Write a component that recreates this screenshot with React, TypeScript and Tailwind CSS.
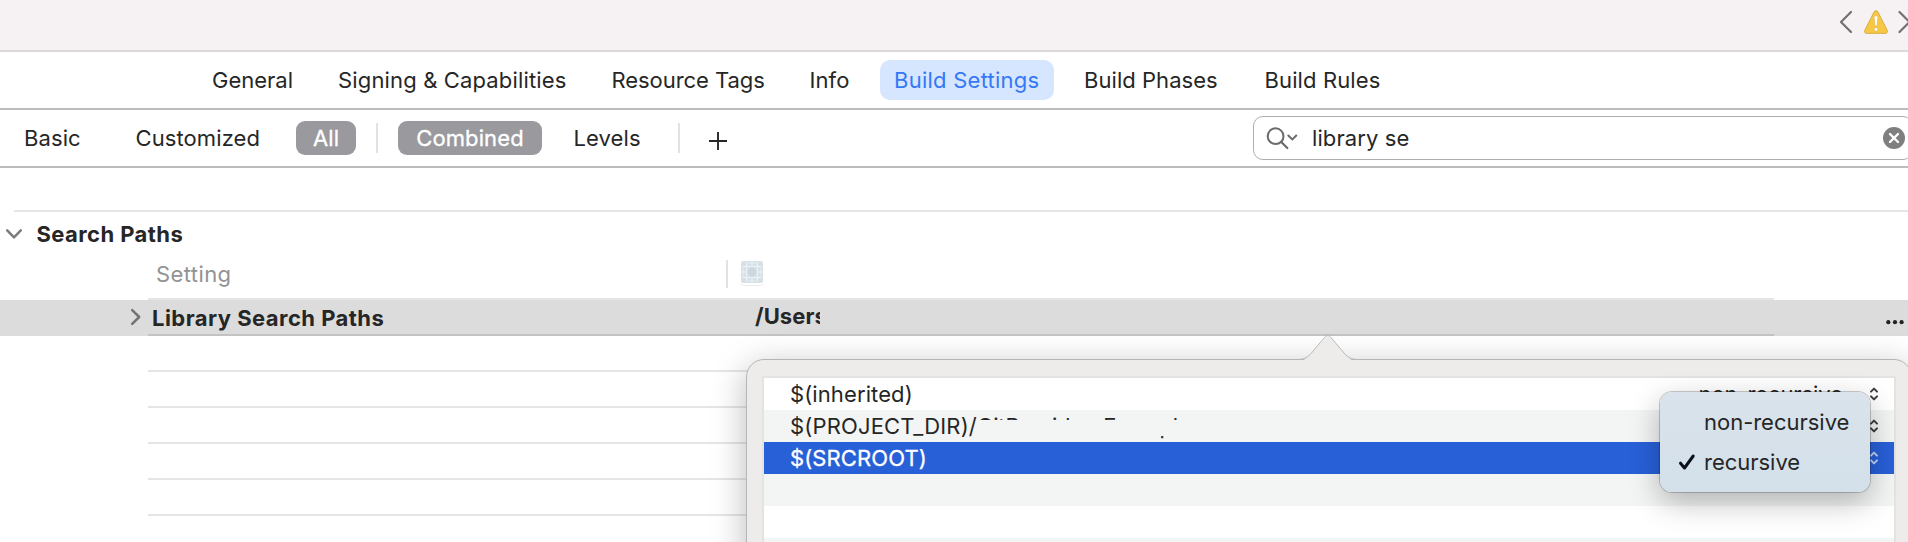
import type { ReactNode } from "react";

const tabs = [
  { label: "General", box: "w-[126px] tracking-[0px]" },
  { label: "Signing & Capabilities", box: "w-[273.5px] tracking-[0.15px]" },
  { label: "Resource Tags", box: "w-[198px] tracking-[-0.05px]" },
  { label: "Info", box: "w-[70.5px] tracking-[0.1px]" },
  { label: "Build Settings", box: "w-[174px] pl-[14px] mr-[30px] tracking-[0.25px]", active: true },
  { label: "Build Phases", box: "w-[180.5px] tracking-[0.05px]" },
  { label: "Build Rules", box: "w-[130px] tracking-[0.12px]" },
];

function Titlebar() {
  return (
    <header className="flex h-[52px] shrink-0 justify-end overflow-hidden border-b-2 border-[#dcd9da] bg-[#f6f2f4]">
      <svg width="72" height="44" viewBox="0 0 72 44" fill="none">
        <path d="M15 12 5 22l10 10" stroke="#737072" strokeWidth="2.2" strokeLinecap="round" strokeLinejoin="round" />
        <path
          d="M38.1 11.9c.8-1.6 3-1.6 3.8 0l9.4 18.6c.7 1.4-.2 2.8-1.7 2.8H30.4c-1.500 0-2.400-1.400-1.700-2.800z"
          fill="#f6c844"
          stroke="#dcab3c"
          strokeWidth="1"
        />
        <path d="M38.100 17.600c-.1-2.400 3.900-2.400 3.800 0l-.8 7.400c-.2 1.600-2 1.600-2.200 0z" fill="#fff" stroke="#d4a63d" strokeWidth=".5" />
        <circle cx="40" cy="29.300" r="1.900" fill="#fff" stroke="#d4a63d" strokeWidth=".5" />
        <path d="M63.500 12l10 10-10 10" stroke="#737072" strokeWidth="2.200" strokeLinecap="round" strokeLinejoin="round" />
      </svg>
    </header>
  );
}

function Tabs() {
  return (
    <nav className="flex h-[58px] shrink-0 items-center border-b-2 border-[#bcbcbc] pl-[212px]">
      {tabs.map((t) => (
        <div
          key={t.label}
          className={`${t.box} flex h-10 shrink-0 items-center rounded-[10px] whitespace-nowrap ${
            t.active ? "bg-[#d6e6fe] text-[#3478f6]" : ""
          }`}
        >
          {t.label}
        </div>
      ))}
    </nav>
  );
}

function FilterBar() {
  return (
    <div className="flex h-[58px] shrink-0 items-center border-b-2 border-[#bcbcbc] tracking-[0.1px] *:shrink-0">
      <span className="ml-[24px] w-[111.5px]">Basic</span>
      <span className="w-[160.5px]">Customized</span>
      <span className="flex h-[34px] w-[60px] items-center justify-center rounded-[9px] bg-[#9a999e] text-white [-webkit-text-stroke:0.3px_white]">
        All
      </span>
      <span className="ml-5 h-[30px] w-0.5 bg-[#e2e2e2]" />
      <span className="ml-5 flex h-[34px] w-[144px] items-center justify-center rounded-[9px] bg-[#9a999e] text-white [-webkit-text-stroke:0.3px_white]">
        Combined
      </span>
      <span className="ml-[31.5px] w-[104.5px]">Levels</span>
      <span className="h-[30px] w-0.5 bg-[#e2e2e2]" />
      <svg className="mt-[6px] ml-[28px]" width="20" height="20" viewBox="0 0 20 20">
        <path d="M1 10h18M10 1v18" stroke="#262626" strokeWidth="1.9" />
      </svg>
      <div className="ml-[525px] flex h-11 w-[660px] items-center rounded-[10px] border border-[#aeaeae] bg-white">
        <svg className="ml-[12px]" width="34" height="28" viewBox="0 0 34 28" fill="none" strokeLinecap="round">
          <circle cx="9.6" cy="12.2" r="7.9" stroke="#6b6b6b" strokeWidth="2" />
          <path d="M15.3 18l6 6" stroke="#6b6b6b" strokeWidth="2.2" />
          <path d="M22.3 11.5l4 3.9 4-3.9" stroke="#6b6b6b" strokeWidth="2" />
        </svg>
        <span className="ml-[12px] grow">library se</span>
        <svg className="mr-[7.5px]" width="22" height="22" viewBox="0 0 22 22">
          <circle cx="11" cy="11" r="11" fill="#7f7f7f" />
          <path d="M7 7l8 8M15 7l-8 8" stroke="#fff" strokeWidth="2.4" strokeLinecap="round" />
        </svg>
      </div>
    </div>
  );
}

function AppIcon() {
  return (
    <svg className="-mt-1 ml-[9px]" width="30" height="30" viewBox="0 0 30 30" fill="none">
      <rect x="2" y="1.8" width="26" height="27.4" rx="6" fill="#eeeeee" />
      <rect x="1.5" y="1" width="27" height="27" rx="6" fill="#ffffff" />
      <rect x="4" y="4" width="22" height="22" rx="2.5" fill="#d5e0e6" />
      <g stroke="#edf2f5" strokeWidth=".8">
        <path d="M4 9.500h22M4 20.500h22M9.500 4v22M20.500 4v22M4 15h4.500M21.500 15H26M15 4v4.500M15 21.500V26" />
        <circle cx="15" cy="15" r="9.300" />
        <circle cx="15" cy="15" r="6.300" />
      </g>
      <circle cx="15" cy="15" r="4" fill="#c9d8df" />
    </svg>
  );
}

function SettingsTable() {
  return (
    <main className="flex flex-col">
      <div className="mt-[42px] ml-[14px] h-0.5 bg-[#e5e5e5]" />
      <div className="flex h-11 items-center font-bold tracking-[0.42px]">
        <svg className="ml-[5px] shrink-0" width="18" height="12" viewBox="0 0 18 12" fill="none">
          <path d="M2.2 2.300 9 9.300l6.800-7" stroke="#7c7c7c" strokeWidth="2.500" strokeLinecap="round" strokeLinejoin="round" />
        </svg>
        <span className="ml-[13.500px]">Search Paths</span>
      </div>
      <div className="flex h-[42px] items-center pb-[6px]">
        <span className="ml-[156px] w-[570px] tracking-[0.4px] text-[#929292]">Setting</span>
        <span className="h-7 w-0.5 bg-[#e2e2e2]" />
        <AppIcon />
      </div>
      <div className="ml-[148px] h-0.5 w-[1626px] bg-[#e5e5e5]" />
      <div className="flex h-9 bg-[#dcdcdc] font-bold">
        <div className="flex w-[148px] items-center justify-end pr-[6px] pb-[3px]">
          <svg width="12" height="18" viewBox="0 0 12 18" fill="none">
            <path d="M2.200 2.200 9.200 9l-7 6.800" stroke="#737373" strokeWidth="2.500" strokeLinecap="round" strokeLinejoin="round" />
          </svg>
        </div>
        <div className="flex w-[1626px] items-center border-b-2 border-[#c3c3c3] pt-0.5">
          <span className="w-[607px] pl-[4px] tracking-[0.46px]">Library Search Paths</span>
          <span className="mb-[4px] w-[65px] overflow-hidden tracking-[0.1px]">/Users</span>
        </div>
        <svg className="mt-[18px] ml-[110px]" width="24" height="8" viewBox="0 0 24 8">
          <circle cx="4.300" cy="4.200" r="2.100" fill="#222" />
          <circle cx="11" cy="4.200" r="2.100" fill="#222" />
          <circle cx="17.600" cy="4.200" r="2.100" fill="#222" />
        </svg>
      </div>
      {[0, 1, 2, 3, 4].map((i) => (
        <div key={i} className="ml-[148px] h-9 w-[1626px] border-b-2 border-[#e5e5e5]" />
      ))}
    </main>
  );
}

function Stepper({ color }: { color: string }) {
  return (
    <svg className="shrink-0" width="10" height="14" viewBox="0 0 10 14" fill="none" stroke={color} strokeWidth="2" strokeLinecap="round" strokeLinejoin="round">
      <path d="M2 4.600 5 1.600l3 3M2 9.400l3 3 3-3" />
    </svg>
  );
}

function PathRow({ tone, stepper, mode, children }: { tone: string; stepper?: string; mode?: string; children?: ReactNode }) {
  return (
    <div className={`flex h-8 items-center pl-[26px] whitespace-nowrap ${tone}`}>
      <div className="flex w-[908.5px] items-center">{children}</div>
      <span className="w-[170px] tracking-[-0.1px]">{mode}</span>
      {stepper && <Stepper color={stepper} />}
    </div>
  );
}

function Popover() {
  return (
    <section className="absolute top-[359px] left-[746px] h-[260px] w-[1166px] rounded-[18px] border border-[#b6b6b6] bg-[#edecea] shadow-[0_8px_34px_rgba(0,0,0,0.27)]">
      <svg className="absolute -top-[25px] left-[550px]" width="62" height="27" viewBox="0 0 62 27">
        <path d="M0 25.500h1c6 0 9.500-2 13.500-6.500L27.500 3.500c2.200-2.600 4.300-2.600 6.500 0L47 19c4 4.500 7.500 6.500 13.500 6.500H62V27H0z" fill="#edecea" />
        <path d="M0 24.500h1c6 0 9.500-2 13.500-6.500L27.500 2.500c2.200-2.600 4.300-2.600 6.500 0L47 18c4 4.500 7.500 6.500 13.500 6.500H62" fill="none" stroke="#b6b6b6" />
      </svg>
      <div className="mt-4 ml-[15px] w-[1134px] border-2 border-[#e3e3e2] bg-white">
        <PathRow tone="bg-white" stepper="#3c3c3c" mode="non-recursive">
          <span className="tracking-[0.1px]">$(inherited)</span>
        </PathRow>
        <PathRow tone="bg-[#f3f4f4]" stepper="#3c3c3c">
          <span className="tracking-[0.15px]">$(PROJECT_DIR)/</span>
          <span className="relative tracking-[-0.15px]">
            GitProvider <span className="pl-[6px]">Example</span>
            <span className="absolute top-[8px] left-0 h-4 w-full bg-[#f3f4f4]" />
          </span>
        </PathRow>
        <PathRow tone="bg-[#2860d8] text-white" stepper="#c3d2f4">
          <span className="tracking-[0.1px] [-webkit-text-stroke:0.3px_white]">$(SRCROOT)</span>
        </PathRow>
        <PathRow tone="bg-[#f3f4f4]" />
        <PathRow tone="bg-white" />
        <PathRow tone="bg-[#f3f4f4]" />
      </div>
    </section>
  );
}

function ModeMenu() {
  return (
    <ul className="absolute top-[392px] left-[1660px] flex h-[100px] w-[210px] flex-col rounded-[12px] bg-linear-to-b from-[#dae3eb] to-[#d3e0ea] pt-[10px] tracking-[-0.02px] shadow-[0_0_0_1px_rgba(0,0,0,0.2),0_10px_30px_rgba(0,0,0,0.28)]">
      <li className="flex h-10 items-center pl-[44px]">non-recursive</li>
      <li className="flex h-10 items-center pl-[18px]">
        <svg width="18" height="18" viewBox="0 0 18 18" fill="none">
          <path d="M2.500 10.200 6.500 15 15.200 3" stroke="#0b101c" strokeWidth="3" strokeLinecap="round" strokeLinejoin="round" />
        </svg>
        <span className="ml-[8px]">recursive</span>
      </li>
    </ul>
  );
}

export default function App() {
  return (
    <div className="relative flex h-[542px] w-[1908px] flex-col overflow-hidden bg-white font-['Inter',sans-serif] text-[22px] leading-[28px] text-[#262626]">
      <Titlebar />
      <Tabs />
      <FilterBar />
      <SettingsTable />
      <Popover />
      <ModeMenu />
    </div>
  );
}
